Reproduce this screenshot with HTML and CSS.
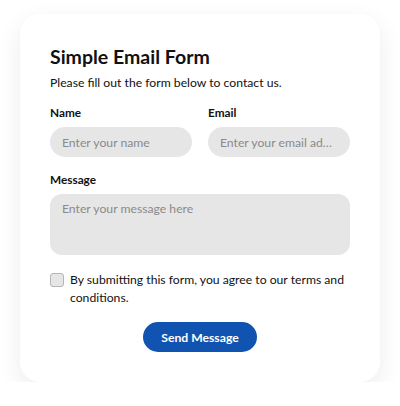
FILE: index.html
```html
<!DOCTYPE html>
<html lang="en">
<head>
  <meta charset="UTF-8" />
  <meta name="viewport" content="width=device-width, initial-scale=1.0"/>
  <title>Simple Email Form</title>
  <link rel="stylesheet" href="styles.css">
</head>
<body>

  <form class="card" onsubmit="return false;">
    <h1>Simple Email Form</h1>
    <p class="intro">Please fill out the form below to contact us.</p>

    <div class="row">
      <div class="field">
        <label for="name">Name</label>
        <input id="name" type="text" placeholder="Enter your name">
      </div>
      <div class="field">
        <label for="email">Email</label>
        <input id="email" type="email" placeholder="Enter your email address">
      </div>
    </div>

    <div class="field">
      <label for="message">Message</label>
      <textarea id="message" placeholder="Enter your message here"></textarea>
    </div>

    <label class="terms">
      <input type="checkbox">
      <span>By submitting this form, you agree to our terms and conditions.</span>
    </label>

    <div class="actions">
      <button type="submit">Send Message</button>
    </div>
  </form>

</body>
</html>
```

FILE: styles.css
```css
:root {
  --field-bg: #e6e6e6;
  --placeholder: #8a8a8a;
  --text: #111111;
  --primary: #1153b1;
}

body {
  margin: 0;
  padding: 14px 20px 0;
  font-family: 'Lato', 'Noto Sans', sans-serif;
  color: var(--text);
  background: #ffffff;
}

.card {
  display: flex;
  flex-direction: column;
  padding: 30px;
  border-radius: 20px;
  background: #ffffff;
  box-shadow: 0 8px 24px rgba(0, 0, 0, 0.08);
}

h1 {
  margin: 0;
  font-size: 19.5px;
  line-height: 26px;
  font-weight: 700;
}

.intro {
  margin: 4px 0 0;
  font-size: 12.2px;
  line-height: 18px;
}

.row {
  display: flex;
  gap: 16px;
  margin-top: 13px;
}

.row .field {
  flex: 1;
  min-width: 0;
}

.field {
  display: flex;
  flex-direction: column;
}

.card > .field {
  margin-top: 15px;
}

label {
  font-size: 11.8px;
  font-weight: 700;
  line-height: 16px;
  margin-bottom: 6px;
}

input[type="text"],
input[type="email"],
textarea {
  box-sizing: border-box;
  border: none;
  outline: none;
  background: var(--field-bg);
  font-family: inherit;
  font-size: 12.2px;
  color: var(--text);
  padding: 0 12px;
}

input[type="text"],
input[type="email"] {
  height: 30px;
  border-radius: 15px;
  text-overflow: ellipsis;
}

textarea {
  height: 61px;
  padding: 7px 12px;
  border-radius: 12px;
  resize: none;
}

::placeholder {
  color: var(--placeholder);
}

.terms {
  display: flex;
  align-items: flex-start;
  gap: 6px;
  margin: 16px 0 0;
  font-weight: 400;
  font-size: 12.2px;
  line-height: 18px;
}

.terms input {
  appearance: none;
  flex: none;
  width: 14px;
  height: 14px;
  margin: 2px 0 0;
  border: 1px solid #b5b5b5;
  border-radius: 3px;
  background: #e6e6e6;
}

.actions {
  display: flex;
  justify-content: center;
  margin-top: 15px;
}

button {
  height: 30px;
  padding: 0 18px;
  border: none;
  border-radius: 15px;
  background: var(--primary);
  color: #ffffff;
  font-family: inherit;
  font-size: 12.2px;
  font-weight: 700;
  cursor: pointer;
}
```
